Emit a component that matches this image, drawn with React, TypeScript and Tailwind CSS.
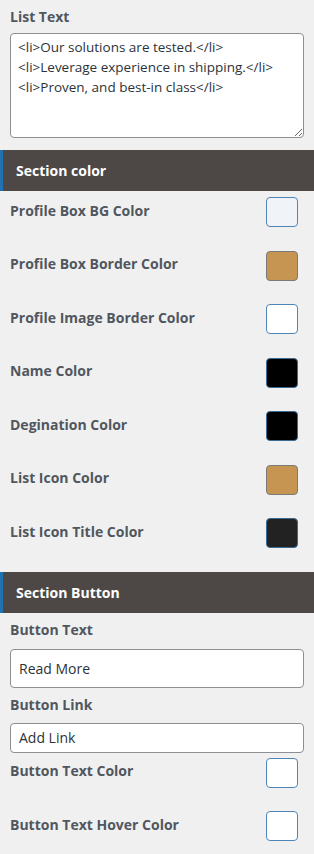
import React from "react";

const font = { fontFamily: '"Open Sans", "Noto Sans", sans-serif' };

function Swatch({ color, border }: { color: string; border: string }) {
  return (
    <div
      className="w-[32px] h-[30px] rounded-[4px] border shrink-0"
      style={{ backgroundColor: color, borderColor: border }}
    />
  );
}

function ColorRow({ label, color, border }: { label: string; color: string; border: string }) {
  return (
    <div className="h-[53.5px] flex items-start justify-between pr-[16px]">
      <div className="h-[30px] pb-[4px] flex items-center text-[14px] font-bold text-[#50575e]">{label}</div>
      <Swatch color={color} border={border} />
    </div>
  );
}

function Header({ title }: { title: string }) {
  return (
    <div className="h-[41px] bg-[#4d4846] border-l-[3px] border-[#2271b1] flex items-center pl-[13px] text-white text-[14px] font-bold">
      {title}
    </div>
  );
}

export default function App() {
  const blue = "#4f86b8";
  const gray = "#7a7a7a";
  return (
    <div className="w-[314px] h-[854px] bg-[#f0f0f1] overflow-hidden" style={font}>
      <div className="px-[10px] pt-[4px] pb-[12px]">
        <div className="h-[24px] flex items-center text-[14px] font-bold text-[#50575e]">List Text</div>
        <textarea
          className="mt-[5px] block w-full h-[105px] bg-white border border-[#8c8f94] rounded-[4px] px-[7px] py-[3px] text-[13.5px] leading-[20px] text-[#2c3338] resize-y outline-none"
          style={font}
          defaultValue={"<li>Our solutions are tested.</li>\n<li>Leverage experience in shipping.</li>\n<li>Proven, and best-in class</li>"}
        />
      </div>
      <Header title="Section color" />
      <div className="pl-[10px] pt-[6px]">
        <ColorRow label="Profile Box BG Color" color="#f0f3f7" border={blue} />
        <ColorRow label="Profile Box Border Color" color="#c79552" border={gray} />
        <ColorRow label="Profile Image Border Color" color="#ffffff" border={blue} />
        <ColorRow label="Name Color" color="#000000" border="#3a6b94" />
        <ColorRow label="Degination Color" color="#000000" border="#3a6b94" />
        <ColorRow label="List Icon Color" color="#c79552" border={gray} />
        <ColorRow label="List Icon Title Color" color="#222222" border="#3a6b94" />
      </div>
      <Header title="Section Button" />
      <div className="px-[10px]">
        <div className="h-[36px] pb-[2px] flex items-center text-[14px] font-bold text-[#50575e]">Button Text</div>
        <input
          className="block w-full h-[39px] bg-white border border-[#8c8f94] rounded-[4px] px-[8px] text-[14px] text-[#2c3338] outline-none"
          style={font}
          defaultValue="Read More"
        />
        <div className="h-[35px] pb-[2px] flex items-center text-[14px] font-bold text-[#50575e]">Button Link</div>
        <input
          className="block w-full h-[30px] bg-white border border-[#8c8f94] rounded-[4px] px-[8px] text-[14px] text-[#2c3338] outline-none"
          style={font}
          defaultValue="Add Link"
        />
      </div>
      <div className="pl-[10px] pt-[5px]">
        <ColorRow label="Button Text Color" color="#ffffff" border={blue} />
        <ColorRow label="Button Text Hover Color" color="#ffffff" border={blue} />
      </div>
    </div>
  );
}
